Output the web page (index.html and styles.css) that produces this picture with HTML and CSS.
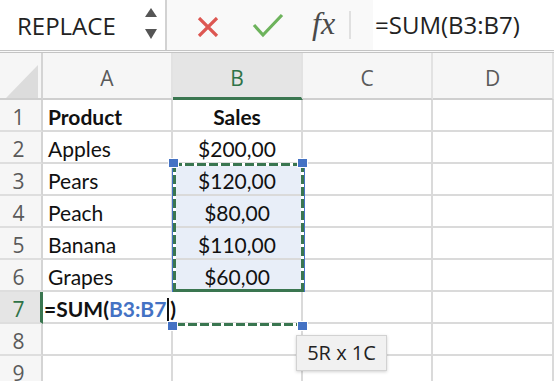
FILE: index.html
```html
<!doctype html>
<html>
<head>
  <meta charset="utf-8">
  <title>Sheet</title>
  <link rel="stylesheet" href="styles.css">
</head>
<body>
  <div class="formula-bar">
    <div class="name-box">
      <span class="name">REPLACE</span>
      <svg class="spin" width="14" height="34" viewBox="0 0 14 34">
        <polygon points="7,0 13,9 1,9" fill="#555" />
        <polygon points="1,21 13,21 7,31" fill="#555" />
      </svg>
    </div>
    <div class="actions">
      <svg class="cancel" width="22" height="20" viewBox="0 0 22 20">
        <path d="M2 1 L20 19 M20 1 L2 19" stroke="#dd5752" stroke-width="3.2" fill="none" />
      </svg>
      <svg class="enter" width="32" height="26" viewBox="0 0 32 26">
        <polyline points="2,13 11,23 30,3" stroke="#6db35c" stroke-width="3.2" fill="none" />
      </svg>
      <span class="fx">fx</span>
      <span class="sep"></span>
    </div>
    <div class="formula">=SUM(B3:B7)</div>
  </div>

  <div class="sheet">
    <div class="hd corner"><span class="tri"></span></div>
    <div class="hd col">A</div>
    <div class="hd col on">B</div>
    <div class="hd col">C</div>
    <div class="hd col">D</div>

    <div class="hd row">1</div>
    <div class="c b">Product</div>
    <div class="c b mid">Sales</div>
    <div class="c"></div>
    <div class="c"></div>

    <div class="hd row">2</div>
    <div class="c">Apples</div>
    <div class="c mid">$200,00</div>
    <div class="c"></div>
    <div class="c"></div>

    <div class="hd row">3</div>
    <div class="c">Pears</div>
    <div class="c mid sel">$120,00</div>
    <div class="c"></div>
    <div class="c"></div>

    <div class="hd row">4</div>
    <div class="c">Peach</div>
    <div class="c mid sel">$80,00</div>
    <div class="c"></div>
    <div class="c"></div>

    <div class="hd row">5</div>
    <div class="c">Banana</div>
    <div class="c mid sel">$110,00</div>
    <div class="c"></div>
    <div class="c"></div>

    <div class="hd row">6</div>
    <div class="c">Grapes</div>
    <div class="c mid sel">$60,00</div>
    <div class="c"></div>
    <div class="c"></div>

    <div class="hd row on">7</div>
    <div class="c edit">=SUM(<span class="ref">B3:B7</span><span class="caret"></span>)</div>
    <div class="c"></div>
    <div class="c"></div>
    <div class="c"></div>

    <div class="hd row">8</div>
    <div class="c"></div>
    <div class="c"></div>
    <div class="c"></div>
    <div class="c"></div>

    <div class="hd row">9</div>
    <div class="c"></div>
    <div class="c"></div>
    <div class="c"></div>
    <div class="c"></div>

    <!-- copy range + reference handles -->
    <div class="ants"></div>
    <div class="ants-end"></div>
    <span class="knob k1"></span>
    <span class="knob k2"></span>
    <span class="knob k3"></span>
    <span class="knob k4"></span>

    <div class="tip">5R x 1C</div>
  </div>
</body>
</html>
```

FILE: styles.css
```css
body {
  margin: 0;
  background: #fff;
  overflow: hidden;
}

/* Formula bar */
.formula-bar {
  display: flex;
  height: 50px;
  border-bottom: 3px double #c4c4c4;
  background: #f9f9f9;
  font-family: "Open Sans", sans-serif;
  color: #222;
}

.name-box {
  width: 165px;
  display: flex;
  align-items: center;
  background: #fff;
  border-right: 2px solid #d2d2d2;
}

.name {
  font-size: 24px;
  margin-left: 17px;
  width: 127px;
}

.actions {
  width: 206px;
  display: flex;
  align-items: center;
}

.cancel {
  margin-left: 30px;
  margin-top: 3px;
}

.enter {
  margin-left: 33px;
  margin-top: -1px;
}

.fx {
  font-family: "Liberation Serif", serif;
  font-style: italic;
  font-size: 32px;
  color: #4a4a4a;
  margin-left: 28px;
  margin-top: -4px;
}

.sep {
  width: 2px;
  height: 28px;
  background: #e0e0e0;
  margin-left: 14px;
}

.formula {
  flex: 1;
  background: #fff;
  font-size: 24px;
  line-height: 50px;
  padding-left: 2px;
}

/* Sheet grid */
.sheet {
  position: relative;
  display: grid;
  grid-template-columns: 43px 130px 130px 130px 1fr;
  grid-template-rows: 47px repeat(9, 32px);
  font-family: "Lato", sans-serif;
  font-size: 21px;
  color: #111;
}

.hd {
  box-sizing: border-box;
  background: #f6f6f6;
  color: #5a5a5a;
  font-family: "Open Sans", sans-serif;
  font-size: 21px;
  display: flex;
  align-items: center;
  justify-content: center;
}

.hd.col {
  border-right: 2px solid #e2e2e2;
  border-bottom: 2px solid #cfcfcf;
  padding-top: 5px;
}

.hd.corner {
  border-right: 2px solid #d4d4d4;
  border-bottom: 2px solid #cfcfcf;
}

.tri {
  width: 0;
  height: 0;
  border-left: 32px solid transparent;
  border-bottom: 33px solid #dcdcdc;
  margin: 8px 3px 0 0;
  align-self: flex-end;
  margin-left: auto;
}

.hd.row {
  border-right: 2px solid #d4d4d4;
  border-bottom: 2px solid #dedede;
  padding-right: 4px;
  padding-top: 3px;
}

.hd.on {
  background: #e5e5e5;
  color: #2f7347;
}

.hd.col.on {
  border-bottom: 3px solid #3a7650;
}

.hd.row.on {
  border-right: 3px solid #3a7650;
  padding-right: 3px;
}

.c {
  box-sizing: border-box;
  border-right: 2px solid #dadada;
  border-bottom: 2px solid #dadada;
  padding: 2px 5px 0;
  line-height: 30px;
  white-space: nowrap;
}

.c.b {
  font-weight: bold;
}

.c.mid {
  text-align: center;
}

.c.sel {
  background: #e8eef8;
}

.c.edit {
  font-weight: bold;
  padding-left: 1px;
  overflow: visible;
  border-right-color: transparent;
}

.ref {
  color: #4472c4;
}

.caret {
  display: inline-block;
  width: 2px;
  height: 24px;
  background: #111;
  vertical-align: -5px;
  margin: 0 1px;
}

/* Overlays */
.ants {
  position: absolute;
  left: 172px;
  top: 110px;
  width: 133px;
  height: 129px;
  box-sizing: border-box;
  border-left: 1px solid #4472c4;
  border-right: 1px solid #4472c4;
  background:
    repeating-linear-gradient(90deg, #3a7650 0 9px, #fff 9px 12px) top / 100% 3px no-repeat,
    linear-gradient(#3a7650, #3a7650) bottom / 100% 3px no-repeat,
    repeating-linear-gradient(180deg, #3a7650 0 9px, #fff 9px 12px) left / 3px 100% no-repeat,
    repeating-linear-gradient(180deg, #3a7650 0 9px, #fff 9px 12px) right / 3px 100% no-repeat;
}

.ants-end {
  position: absolute;
  left: 176px;
  top: 270px;
  width: 125px;
  height: 3px;
  background: repeating-linear-gradient(90deg, #3a7650 0 9px, #fff 9px 12px);
}

.knob {
  position: absolute;
  width: 9px;
  height: 8px;
  background: #4472c4;
  border: 1px solid #fff;
}

.k1 { left: 168px; top: 105px; }
.k2 { left: 297px; top: 105px; }
.k3 { left: 167px; top: 268px; }
.k4 { left: 297px; top: 268px; }

.tip {
  position: absolute;
  left: 296px;
  top: 282px;
  width: 91px;
  height: 36px;
  box-sizing: border-box;
  background: #f1f1f1;
  border: 1px solid #d2d2d2;
  box-shadow: 0 1px 3px rgba(0, 0, 0, 0.18);
  font-family: "Open Sans", sans-serif;
  font-size: 20px;
  line-height: 34px;
  text-align: center;
  color: #222;
}
```
